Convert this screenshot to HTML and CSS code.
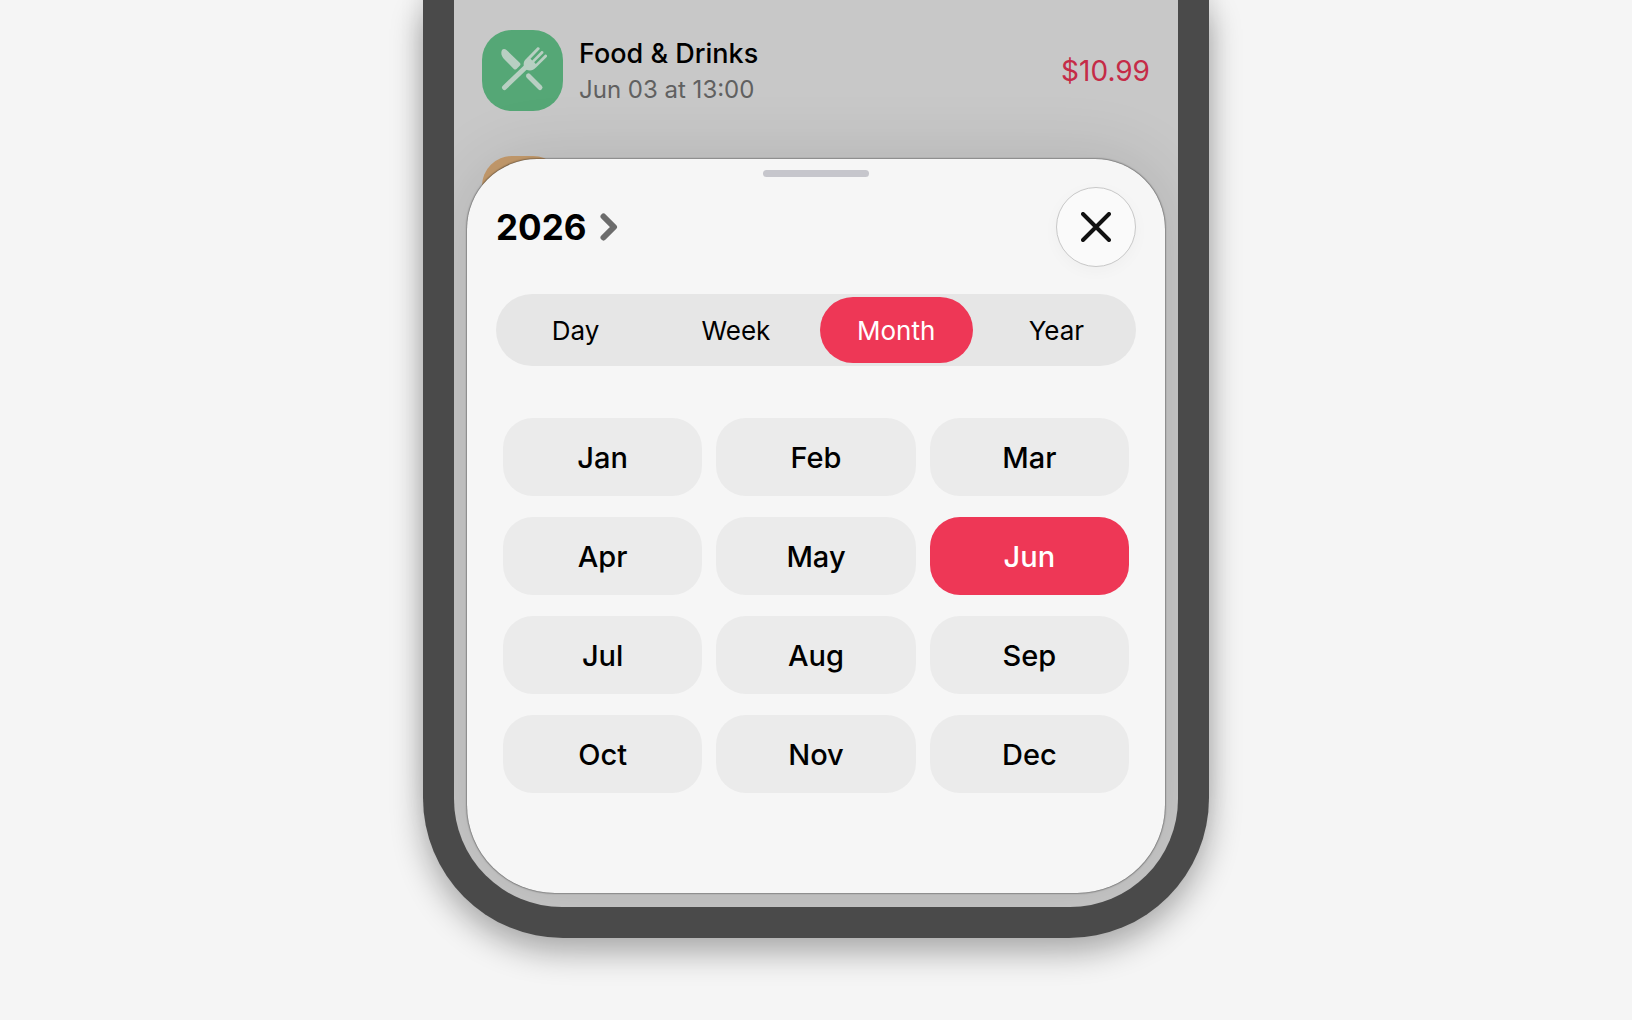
FILE: index.html
```html
<!DOCTYPE html>
<html lang="en">
<head>
    <meta charset="UTF-8">
    <meta name="viewport" content="width=device-width, initial-scale=1.0">
    <title>Select Month</title>
    <link rel="stylesheet" href="styles.css">
</head>
<body>

    <div class="phone">
        <div class="screen">

            <ul class="transactions">
                <li class="transaction">
                    <span class="category food">
                        <svg viewBox="0 0 81 81" width="81" height="81" aria-hidden="true">
                            <path d="M20 20C21 18.500 23 18.500 24.500 20L38 33Q39 34.300 38 35.500L34.500 39Q33 40 31.800 39L22.500 29.500C19.500 26.500 18.500 23 20 20Z"/>
                            <path d="M46.500 46L58 57.500" class="handle"/>
                            <path d="M22.500 57.500L46 35" class="handle"/>
                            <path d="M42.500 38C41 34 41.500 31 44.500 28.500L55.500 17.300Q57.800 16.800 57.800 19L48.500 28.800L50.200 30.400L59.500 21Q61.800 20.700 61.500 23L52.200 32.300L53.800 34L63.200 24.500Q65.500 24.300 65 26.800L54 37.500C51 40.500 48 41.500 44 39.500Z"/>
                        </svg>
                    </span>
                    <div class="details">
                        <p class="name">Food &amp; Drinks</p>
                        <p class="date">Jun 03 at 13:00</p>
                    </div>
                    <p class="amount">$10.99</p>
                </li>
                <li class="transaction">
                    <span class="category other"></span>
                </li>
            </ul>

            <div class="sheet">
                <div class="grabber"></div>

                <div class="sheet-header">
                    <button class="year" type="button">
                        2026
                        <svg viewBox="0 0 18 28" width="18" height="28" aria-hidden="true">
                            <path d="M3.500 3.500L14 14L3.500 24.500"/>
                        </svg>
                    </button>
                    <button class="close" type="button" aria-label="Close">
                        <svg viewBox="0 0 30 30" width="30" height="30" aria-hidden="true">
                            <path d="M2 2L28 28M28 2L2 28"/>
                        </svg>
                    </button>
                </div>

                <div class="periods">
                    <button type="button">Day</button>
                    <button type="button">Week</button>
                    <button type="button" class="selected">Month</button>
                    <button type="button">Year</button>
                </div>

                <div class="months">
                    <button type="button">Jan</button>
                    <button type="button">Feb</button>
                    <button type="button">Mar</button>
                    <button type="button">Apr</button>
                    <button type="button">May</button>
                    <button type="button" class="selected">Jun</button>
                    <button type="button">Jul</button>
                    <button type="button">Aug</button>
                    <button type="button">Sep</button>
                    <button type="button">Oct</button>
                    <button type="button">Nov</button>
                    <button type="button">Dec</button>
                </div>
            </div>

        </div>
    </div>

    <script>
        // one selected button per group
        document.querySelectorAll('.periods, .months').forEach(group => {
            group.addEventListener('click', e => {
                if (e.target.tagName !== 'BUTTON') return;
                group.querySelector('.selected').classList.remove('selected');
                e.target.classList.add('selected');
            });
        });
    </script>
</body>
</html>
```
FILE: styles.css
```css
* {
    box-sizing: border-box;
}
body {
    margin: 0;
    min-height: 100vh;
    padding-bottom: 60px;
    background-color: #f5f5f5;
    font-family: Inter, "Liberation Sans", sans-serif;
    color: #000;
}
p, ul {
    margin: 0;
    padding: 0;
}
button {
    border: none;
    padding: 0;
    background: none;
    font-family: inherit;
    color: inherit;
    cursor: pointer;
}
.phone {
    max-width: 786px;
    margin: 0 auto;
    padding: 0 31px 31px;
    background: #4a4a4a;
    border-radius: 0 0 140px 140px;
    box-shadow: 0 14px 32px rgba(0, 0, 0, 0.32), 0 -30px 24px rgba(0, 0, 0, 0.1);
}
/* list and sheet share one grid cell */
.screen {
    display: grid;
    background: #c8c8c8;
    border-radius: 0 0 108px 108px;
    overflow: hidden;
}
.transactions, .sheet {
    grid-area: 1 / 1;
}
.transactions {
    list-style: none;
    padding: 30px 28px;
}
.transaction {
    display: flex;
    align-items: center;
    gap: 16px;
    margin-bottom: 45px;
}
.category {
    width: 81px;
    height: 81px;
    border-radius: 30px;
}
.category svg {
    display: block;
    fill: #b8cfc2;
}
.category .handle {
    fill: none;
    stroke: #b8cfc2;
    stroke-width: 5;
    stroke-linecap: round;
}
.food {
    background: #55a776;
}
.other {
    background: #c69c6d;
}
.details {
    flex: 1;
    padding-top: 2px;
}
.name {
    font-size: 27px;
    font-weight: 500;
    line-height: 36px;
}
.date {
    font-size: 24px;
    line-height: 36px;
    color: #606060;
}
.amount {
    font-size: 28px;
    color: #c52b47;
}

.sheet {
    margin: 159px 13px 14px;
    padding: 11px 29px 100px;
    background: #f6f6f6;
    border-radius: 70px 70px 88px 88px;
    box-shadow: 0 0 2px rgba(0, 0, 0, 0.9), 0 0 70px rgba(0, 0, 0, 0.12);
}
.grabber {
    width: 106px;
    height: 7px;
    margin: 0 auto 10px;
    border-radius: 4px;
    background: #c6c6cc;
}
.sheet-header {
    display: flex;
    justify-content: space-between;
    align-items: center;
    margin-bottom: 27px;
}
.year {
    display: flex;
    align-items: center;
    gap: 14px;
    font-size: 35px;
    font-weight: 700;
}
.year svg {
    fill: none;
    stroke: #6c6c6c;
    stroke-width: 6;
    stroke-linecap: round;
    stroke-linejoin: round;
}
.close {
    display: flex;
    justify-content: center;
    align-items: center;
    width: 80px;
    height: 80px;
    border: 1px solid #c8c8c8;
    border-radius: 50%;
    background: #fafafa;
    box-shadow: 0 4px 16px rgba(0, 0, 0, 0.03);
}
.close svg {
    fill: none;
    stroke: #111;
    stroke-width: 4;
    stroke-linecap: round;
}
.periods {
    display: grid;
    grid-template-columns: repeat(4, 1fr);
    gap: 7px;
    height: 72px;
    margin-bottom: 52px;
    padding: 3px;
    border-radius: 36px;
    background: #e6e6e6;
}
.periods button {
    border-radius: 33px;
    font-size: 26px;
}
.months {
    display: grid;
    grid-template-columns: repeat(3, 1fr);
    gap: 21px 14px;
    padding: 0 7px;
}
.months button {
    height: 78px;
    border-radius: 30px;
    background: #ebebeb;
    font-size: 29px;
    font-weight: 500;
}
.periods .selected,
.months .selected {
    background: #ee3756;
    color: #fff;
}
```
